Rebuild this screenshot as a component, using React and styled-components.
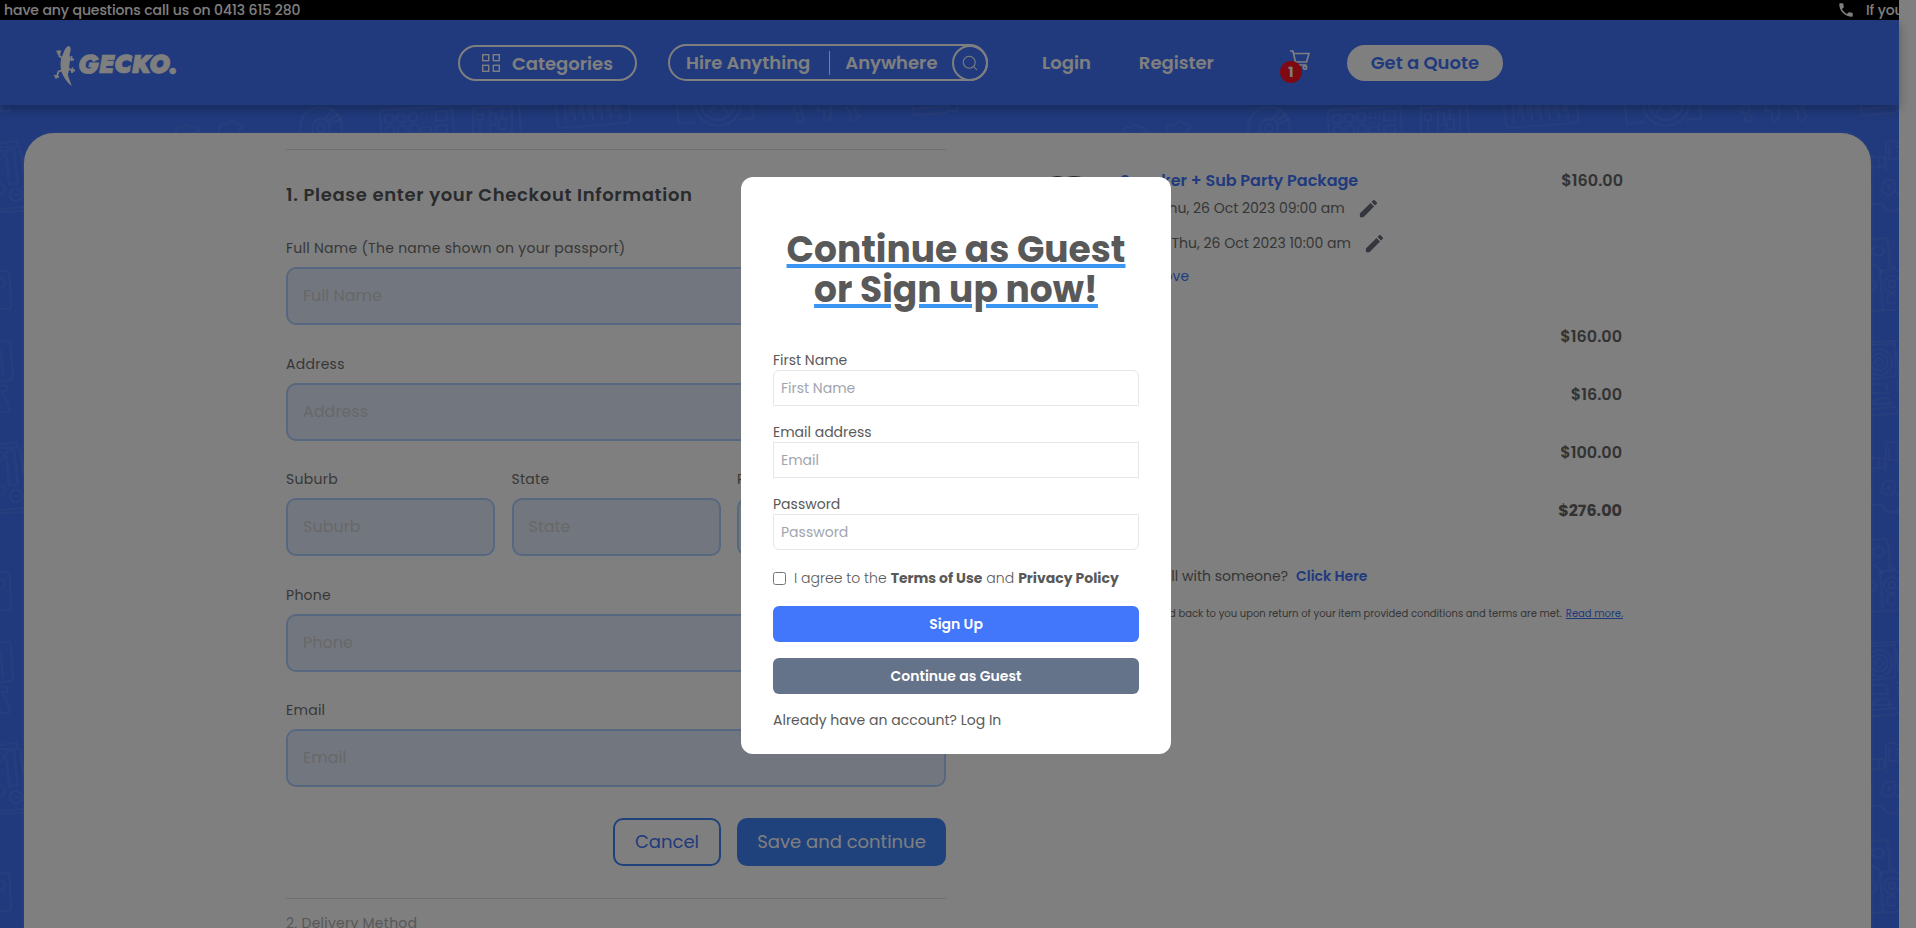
import React from "react";
import styled, { createGlobalStyle } from "styled-components";
import { MdEdit, MdPhone } from "react-icons/md";
import { Search } from "lucide-react";

const BLUE = "#4074fa";

const GlobalStyle = createGlobalStyle`
  * { box-sizing: border-box; }
  body {
    margin: 0;
    background: #fff;
    color: #555;
    font-family: "Poppins", "Inter", "Liberation Sans", sans-serif;
    overflow: hidden;
  }
  button, input { font-family: inherit; }
`;

const Page = styled.div`
  position: relative;
  width: 1916px;
  height: 928px;
  padding-right: 17px;
  overflow: hidden;
`;

const Site = styled.div`
  display: flex;
  flex-direction: column;
  height: 100%;
`;

const Text = styled.span`
  letter-spacing: ${(p) => p.$ls || 0}px;
  white-space: nowrap;
`;

/* announcement bar */

const Ticker = styled.div`
  display: flex;
  justify-content: space-between;
  flex: none;
  height: 20px;
  padding-left: 4px;
  overflow: hidden;
  background: #000;
  color: #fff;
  font-size: 14px;
  font-weight: 500;
  line-height: 20px;
`;

const TickerNext = styled.div`
  display: flex;
  align-items: center;
  gap: 11px;
  width: 62px;
  white-space: nowrap;
  svg { flex: none; }
`;

/* header */

const Header = styled.header`
  position: relative;
  z-index: 1;
  display: flex;
  align-items: flex-end;
  flex: none;
  height: 85px;
  padding: 0 0 24px 53px;
  background: ${BLUE};
  color: #fff;
  font-size: 18px;
  font-weight: 600;
  box-shadow: 0 4px 10px rgba(0, 0, 0, 0.3);
`;

const Logo = styled.svg`
  flex: none;
  margin-bottom: -7px;
`;

const CategoriesButton = styled.button`
  display: flex;
  align-items: center;
  gap: 12px;
  width: 179px;
  height: 36px;
  margin-left: 279px;
  padding: 0 0 0 22px;
  border: 2px solid #fff;
  border-radius: 18px;
  background: none;
  color: inherit;
  font-size: inherit;
  font-weight: inherit;
`;

const SearchPill = styled.div`
  display: flex;
  align-items: center;
  width: 320px;
  height: 37px;
  margin-left: 31px;
  padding-left: 16px;
  border: 2px solid #fff;
  border-radius: 19px;
`;

const Divider = styled.i`
  width: 1px;
  height: 24px;
  margin: 0 15px 0 19px;
  background: #fff;
`;

const SearchButton = styled.span`
  display: flex;
  align-items: center;
  justify-content: center;
  width: 36px;
  height: 36px;
  margin: 0 -2px 0 auto;
  border: 2px solid #fff;
  border-radius: 50%;
`;

const NavLink = styled.a`
  height: 36px;
  margin-left: ${(p) => p.$gap}px;
  line-height: 36px;
`;

const Cart = styled.span`
  position: relative;
  width: 30px;
  height: 36px;
  margin: 0 0 0 66px;
  svg { position: absolute; left: 10px; top: 5px; }
`;

const Badge = styled.b`
  position: absolute;
  left: 0;
  top: 16px;
  width: 22px;
  height: 22px;
  border-radius: 50%;
  background: #ff1220;
  font-size: 14px;
  font-weight: 700;
  line-height: 22px;
  text-align: center;
`;

const QuoteButton = styled.button`
  width: 156px;
  height: 36px;
  margin-left: 37px;
  padding: 0 0 1px;
  border: 0;
  border-radius: 18px;
  background: #fff;
  color: ${BLUE};
  font-size: 18px;
  font-weight: 600;
`;

/* checkout */

const Backdrop = styled.main`
  position: relative;
  flex: 1;
  min-height: 0;
  padding: 28px 28px 0 24px;
  background: ${BLUE};
`;

const Pattern = styled.svg`
  position: absolute;
  inset: 0;
`;

const Panel = styled.section`
  position: relative;
  display: flex;
  gap: 94px;
  height: 100%;
  padding-left: 262px;
  border-radius: 30px 30px 0 0;
  background: #fff;
  box-shadow: 0 0 4px rgba(255, 255, 255, 0.15);
  overflow: hidden;
`;

const Checkout = styled.div`
  flex: none;
  width: 660px;
  padding-top: 16px;
`;

const Rule = styled.hr`
  height: 1px;
  margin: 0;
  border: 0;
  background: #dedfe1;
`;

const StepTitle = styled.h2`
  margin: 31px 0 29px;
  color: #52565a;
  font-size: 18px;
  font-weight: 600;
  line-height: 27px;
  letter-spacing: 0.66px;
`;

const Fields = styled.div`
  display: flex;
  flex-direction: column;
  gap: 27.5px;
`;

const FieldRow = styled.div`
  display: grid;
  grid-template-columns: repeat(3, 1fr);
  gap: 16.5px;
`;

const Field = styled.label`
  display: flex;
  flex-direction: column;
  gap: 8px;
  min-width: 0;
  color: #6f6f6f;
  font-size: 14px;
  line-height: 22px;
`;

const FieldInput = styled.input`
  width: 100%;
  height: 58px;
  padding: 0 15px 1px;
  border: 2px solid #acd0ff;
  border-radius: 10px;
  background: #e5eefe;
  font-size: 16px;
  &::placeholder { color: #d0d0d0; opacity: 1; }
`;

const Actions = styled.div`
  display: flex;
  justify-content: flex-end;
  gap: 16px;
  margin: 31px 0 32px;
`;

const ActionButton = styled.button`
  width: ${(p) => p.$width}px;
  height: 48px;
  padding: 0 0 1px;
  border: 2px solid #3f83f8;
  border-radius: 10px;
  background: ${(p) => (p.$filled ? "#3f83f8" : "transparent")};
  color: ${(p) => (p.$filled ? "#fff" : BLUE)};
  font-size: 18px;
`;

const NextStep = styled.p`
  margin: 13px 0 0;
  color: #b0b0b0;
  font-size: 14px;
  line-height: 22px;
`;

/* order summary */

const Summary = styled.aside`
  width: 583px;
  padding-top: 36px;
  font-size: 14px;
  line-height: 22px;
  color: #6c6c6c;
`;

const Item = styled.div`
  display: flex;
  height: 155.5px;
`;

const Thumb = styled.svg`
  flex: none;
  margin: 7px 32px 0 8px;
`;

const ItemInfo = styled.div`
  display: flex;
  flex-direction: column;
  flex: 1;
`;

const ItemName = styled.a`
  margin-bottom: 4px;
  color: ${BLUE};
  font-size: 16px;
  font-weight: 600;
  line-height: 24px;
`;

const DateRow = styled.div`
  display: flex;
  align-items: center;
  height: 22px;
  margin-bottom: ${(p) => p.$after}px;
  svg { margin-left: 12px; color: #6a6d7c; }
`;

const DateLabel = styled.span`
  flex: none;
  width: ${(p) => p.$width}px;
`;

const RemoveLink = styled.a`
  padding-left: 12px;
  color: ${BLUE};
`;

const Price = styled.span`
  color: #666;
  font-size: 16px;
  font-weight: ${(p) => (p.$total ? 700 : 600)};
  line-height: 24px;
`;

const Totals = styled.div`
  display: flex;
  flex-direction: column;
  align-items: flex-end;
  gap: 34px;
  padding-right: 1px;
`;

const Help = styled.p`
  display: flex;
  gap: 8px;
  margin: 42px 0 19px;
`;

const HelpText = styled.span`
  width: 248px;
  text-align: right;
`;

const HelpLink = styled.a`
  color: ${BLUE};
  font-weight: 600;
`;

const Note = styled.p`
  display: flex;
  justify-content: flex-end;
  gap: 4px;
  margin: 0;
  font-size: 10px;
  line-height: 16px;
`;

const NoteLink = styled.a`
  color: ${BLUE};
  text-decoration: underline;
`;

/* dialog */

const Overlay = styled.div`
  position: absolute;
  inset: 0;
  z-index: 10;
  display: flex;
  align-items: center;
  justify-content: center;
  padding: 3px 4px 0 0;
  background: rgba(0, 0, 0, 0.5);
`;

const Dialog = styled.div`
  display: flex;
  flex-direction: column;
  width: 430px;
  height: 577px;
  padding: 53px 32px 24px;
  border-radius: 12px;
  background: #fff;
  color: #595959;
  font-size: 14px;
  line-height: 20px;
`;

const DialogTitle = styled.h1`
  margin: 0 0 40px;
  font-size: 36px;
  font-weight: 700;
  line-height: 40px;
  text-align: center;
  text-decoration: underline #3b96f3 4px;
  text-underline-offset: 2px;
`;

const DialogFields = styled.div`
  display: flex;
  flex-direction: column;
  gap: 16px;
`;

const DialogField = styled.label`
  display: flex;
  flex-direction: column;
`;

const DialogInput = styled.input`
  height: 36px;
  padding: 0 7px;
  border: 1px solid #e5e7eb;
  border-radius: ${(p) => p.$radius || "0"};
  background: #fff;
  font-size: 14px;
  &::placeholder { color: #a1a5b0; opacity: 1; }
`;

const Agreement = styled.div`
  display: flex;
  align-items: center;
  gap: 4px;
  margin: 18px 0;
  font-weight: 300;
`;

const PolicyLink = styled.a`
  font-weight: 700;
  white-space: nowrap;
`;

const Checkbox = styled.input`
  width: 13px;
  height: 13px;
  margin: 0 4px 0 0;
`;

const DialogButton = styled.button`
  height: 36px;
  margin-bottom: 16px;
  padding: 0;
  border: 0;
  border-radius: 6px;
  background: ${(p) => (p.$muted ? "#64728a" : "#4277fc")};
  color: #fff;
  font-size: 14px;
  font-weight: 600;
`;

const Wordmark = styled.text`
  font: italic 900 25.5px "Jost", "Poppins", "Open Sans", sans-serif;
`;

function GeckoLogo() {
  return (
    <Logo width="126" height="42" viewBox="0 0 126 42">
      <g fill="#fff">
        <path d="M16 0C18.300 1 18 5.500 16.500 8.500C18 12 16.500 17 16.200 21C16.600 26 14 27 15.500 31L18.800 40C13.500 36 11 31.500 9.500 28C7 24 7 14 9 10.500C11 6.500 11.500 1 16 0Z" />
        <g fill="none" stroke="#fff" strokeWidth="1.800">
          <path d="M10 12L6.500 10.500L6.300 6M3.500 5.500H8M4.500 8L7 6.500M15 14L19 12.500M18.500 10V15M17.500 13L21 13.500M14 22L19 24.500M19.500 21.500L19 27M18 24.500L22 24.500M10 24L5.500 25.500L4 30M1 29.500L6 31M2.500 32.500L4.500 29" />
        </g>
        <Wordmark x="25" y="27" textLength="99" lengthAdjust="spacingAndGlyphs" stroke="#fff" strokeWidth=".7">GECKO.</Wordmark>
      </g>
    </Logo>
  );
}

function GridIcon() {
  return (
    <svg width="18" height="18" viewBox="0 0 18 18" fill="none" stroke="#fff" strokeWidth="1.400">
      <rect x=".7" y=".7" width="6" height="6" />
      <rect x="11.300" y=".7" width="6" height="6" />
      <rect x=".7" y="11.300" width="6" height="6" />
      <rect x="11.300" y="11.300" width="6" height="6" />
    </svg>
  );
}

function CartIcon() {
  return (
    <svg width="20" height="20" viewBox="0 0 20 20" fill="none" stroke="#fff" strokeWidth="1.700">
      <path d="M0 1H3L5.500 12H16.500L19 3.500H3.700M5.500 12L4 15H16.500" />
      <circle cx="6" cy="17.500" r="1.700" />
      <circle cx="15" cy="17.500" r="1.700" />
    </svg>
  );
}

function MusicPattern() {
  return (
    <Pattern width="1899" height="823">
      <defs>
        <pattern id="gear" width="948" height="301" patternUnits="userSpaceOnUse">
          <g fill="none" stroke="#fff" strokeOpacity=".065" strokeWidth="2.200">
            <path d="M0 38L17 36V42L20 42L24 68M0 42H16M6 45L14 44L18 78L9 79ZM0 104L24 102M0 107L24 106" />
            <circle cx="16" cy="90" r="6" /><path d="M14 90h5" />
            <circle cx="0" cy="50" r="4" /><circle cx="0" cy="84" r="5" />
            <path d="M0 166H6Q9 166 9.500 170L11 200Q11 204 8 204H0" />
            <circle cx="0" cy="178" r="5" /><path d="M4 186h2M5 200h2" />
            <path d="M0 236H8Q10 236 10.500 240L13 270Q13 275 9 275L0 277M0 244L3 270M0 281H7V286H2L9 300M0 0V6H9V1" />
            <path d="M176 28V25Q177 21 182 23Q187 17 192 23Q198 21 199 26L194 28M219 28V22Q221 18 226 20Q231 13 236 19Q242 18 243 23L238 26" />
            <circle cx="321" cy="23" r="21" /><circle cx="321" cy="23" r="9" /><circle cx="321" cy="23" r="4" />
            <path d="M325 14L333 4M328 16L338 9M330 19L341 14" />
            <path d="M381 28L380 9Q380 5 384 5L448 1Q452 1 452 5L454 28" />
            <circle cx="389" cy="14" r="4.500" /><circle cx="401" cy="13" r="4.500" /><circle cx="413" cy="12" r="4.500" />
            <circle cx="390" cy="26" r="4.500" /><circle cx="402" cy="25" r="4.500" /><circle cx="414" cy="24" r="4.500" />
            <path d="M421 8h12M421 13h12M421 18h12" strokeDasharray="2 3" />
            <path d="M436 7L447 6V15L436 16ZM421 23L431 22V28H421ZM436 21L447 20V28H436Z" />
            <path d="M473 28V3L519 0L521 28M477 9H483V15H477ZM480 15V28M490 28V4M490 8H496V20H490M502 3V14M499 14H506V24H499ZM512 1V28" />
            <path d="M556 0L558 19Q558 23 562 23L626 18Q630 18 630 14L629 0M565 0L566 18M574 0L575 16M583 0L584 16M592 0L593 15M601 0L602 15M610 0L611 14M619 0L620 14" />
            <path d="M571 0V10M580 0V9M589 0V9M598 0V8M607 0V8M616 0V7" strokeWidth="3.500" />
            <path d="M677 0L679 19L696 17M738 15L753 13L752 0M684 4v1M684 13v1" />
            <path d="M695 -2A23 23 0 0 0 741 -2M701 -2A17 17 0 0 0 735 -2M718 -4L708 8M718 -4L729 9" />
            <path d="M794 2L801 0V8L804 14Q801 20 797 15L798 8H794ZM818 0V6H824V14Q828 18 831 12V0M846 1L850 8V14Q855 18 859 11L853 2L858 0" />
            <path d="M913 0L914 10L957 7M914 4L948 1" />
            <path d="M923 52H936L937 61L923 63M931 52V62M938 66V38Q938 36 942 36H948M941 41V54H948" />
            <path d="M923 80V99H934Q938 108 948 106" />
            <path d="M935 82Q934 75 941 75Q947 73 947 80Q951 85 945 87Q942 93 937 88Q931 87 935 82ZM938 82H944M941 79V85" />
            <path d="M923 134L936 133Q940 133 940 138L942 162H948M923 206L935 205L932 166L948 164M936 205H948" />
            <ellipse cx="930" cy="146" rx="6" ry="4.500" />
            <circle cx="944" cy="179" r="8" /><circle cx="944" cy="179" r="3.500" /><circle cx="944" cy="194" r="5" />
            <circle cx="923" cy="180" r="5" /><path d="M923 159Q931 160 934 169" />
            <path d="M923 237L948 236M923 240L948 239M947 240L948 271L923 274M923 308L948 306M923 279H938L940 288H923M928 294L940 293L943 299H925Z" />
            <circle cx="931" cy="257" r="13" /><circle cx="931" cy="257" r="8.500" /><circle cx="931" cy="257" r="4" />
          </g>
        </pattern>
      </defs>
      <rect width="1899" height="823" fill="url(#gear)" />
    </Pattern>
  );
}

function LabeledField({ label, placeholder }) {
  return (
    <Field>
      <Text $ls={0.27}>{label}</Text>
      <FieldInput placeholder={placeholder || label} />
    </Field>
  );
}

export default function App() {
  return (
    <Page>
      <GlobalStyle />
      <Site>
        <Ticker>
          <Text $ls={-0.09}>have any questions call us on 0413 615 280</Text>
          <TickerNext>
            <MdPhone size={18} />
            <Text $ls={-0.09}>If you</Text>
          </TickerNext>
        </Ticker>
        <Header>
          <GeckoLogo />
          <CategoriesButton><GridIcon /><Text>Categories</Text></CategoriesButton>
          <SearchPill>
            <Text>Hire Anything</Text>
            <Divider />
            <Text>Anywhere</Text>
            <SearchButton><Search size={18} strokeWidth={1.4} /></SearchButton>
          </SearchPill>
          <NavLink $gap={54}>Login</NavLink>
          <NavLink $gap={48}>Register</NavLink>
          <Cart><CartIcon /><Badge>1</Badge></Cart>
          <QuoteButton>Get a Quote</QuoteButton>
        </Header>
        <Backdrop>
          <MusicPattern />
          <Panel>
            <Checkout>
              <Rule />
              <StepTitle>1. Please enter your Checkout Information</StepTitle>
              <Fields>
                <LabeledField label="Full Name (The name shown on your passport)" placeholder="Full Name" />
                <LabeledField label="Address" />
                <FieldRow>
                  <LabeledField label="Suburb" />
                  <LabeledField label="State" />
                  <LabeledField label="Postcode" />
                </FieldRow>
                <LabeledField label="Phone" />
                <LabeledField label="Email" />
              </Fields>
              <Actions>
                <ActionButton $width={108}>Cancel</ActionButton>
                <ActionButton $width={209} $filled>Save and continue</ActionButton>
              </Actions>
              <Rule />
              <NextStep><Text $ls={0.25}>2. Delivery Method</Text></NextStep>
            </Checkout>
            <Summary>
              <Item>
                <Thumb width="40" height="60" viewBox="0 0 40 60">
                  <path d="M0 2.500Q7-1 15 1L16 30H0ZM19 1Q29-1 38 2.500V30H19Z" fill="#0c0c0c" />
                </Thumb>
                <ItemInfo>
                  <ItemName>Speaker + Sub Party Package</ItemName>
                  <DateRow $after={13}>
                    <DateLabel $width={41}>Start</DateLabel>
                    <Text>Thu, 26 Oct 2023 09:00 am</Text>
                    <MdEdit size={23} />
                  </DateRow>
                  <DateRow $after={10.5}>
                    <DateLabel $width={51.5}>End</DateLabel>
                    <Text>Thu, 26 Oct 2023 10:00 am</Text>
                    <MdEdit size={23} />
                  </DateRow>
                  <RemoveLink>Remove</RemoveLink>
                </ItemInfo>
                <Price>$160.00</Price>
              </Item>
              <Totals>
                <Price>$160.00</Price>
                <Price>$16.00</Price>
                <Price>$100.00</Price>
                <Price $total>$276.00</Price>
              </Totals>
              <Help>
                <HelpText>Need a call with someone?</HelpText>
                <HelpLink>Click Here</HelpLink>
              </Help>
              <Note>
                <Text>Bond is refunded back to you upon return of your item provided conditions and terms are met.</Text>
                <NoteLink>Read more.</NoteLink>
              </Note>
            </Summary>
          </Panel>
        </Backdrop>
      </Site>
      <Overlay>
        <Dialog>
          <DialogTitle>Continue as Guest<br />or Sign up now!</DialogTitle>
          <DialogFields>
            <DialogField>
              First Name
              <DialogInput placeholder="First Name" $radius="6px 6px 0 0" />
            </DialogField>
            <DialogField>
              Email address
              <DialogInput placeholder="Email" />
            </DialogField>
            <DialogField>
              Password
              <DialogInput placeholder="Password" $radius="0 0 6px 6px" />
            </DialogField>
          </DialogFields>
          <Agreement>
            <Checkbox type="checkbox" />
            <Text>I agree to the</Text>
            <PolicyLink>Terms of Use</PolicyLink>
            <Text>and</Text>
            <PolicyLink>Privacy Policy</PolicyLink>
          </Agreement>
          <DialogButton>Sign Up</DialogButton>
          <DialogButton $muted>Continue as Guest</DialogButton>
          <Text>Already have an account? Log In</Text>
        </Dialog>
      </Overlay>
    </Page>
  );
}
